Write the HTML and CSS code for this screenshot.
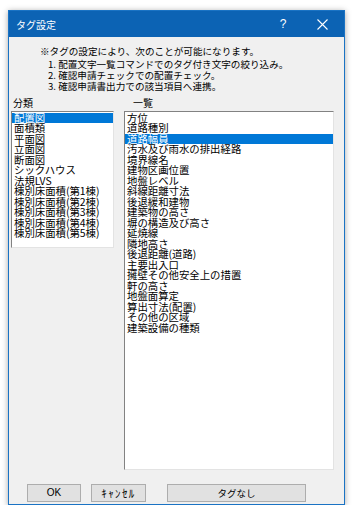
FILE: index.html
```html
<!DOCTYPE html>
<html lang="ja">
<head>
    <meta charset="UTF-8">
    <meta name="viewport" content="width=device-width, initial-scale=1.0">
    <title>タグ設定</title>
    <link rel="stylesheet" href="styles.css">
</head>
<body>
    <div class="window">
        <div class="titlebar">
            <span class="title">タグ設定</span>
            <span class="help">?</span>
            <span class="close">
                <svg width="11" height="11" viewBox="0 0 11 11">
                    <path d="M0.5 0.5 L10.5 10.5 M10.5 0.5 L0.5 10.5" stroke="#fff" stroke-width="1.1" fill="none"/>
                </svg>
            </span>
        </div>
        <div class="content">
            <div class="notes">
                <p class="note-head">※タグの設定により、次のことが可能になります。</p>
                <p class="note-item">1. 配置文字一覧コマンドでのタグ付き文字の絞り込み。</p>
                <p class="note-item">2. 確認申請チェックでの配置チェック。</p>
                <p class="note-item">3. 確認申請書出力での該当項目へ連携。</p>
            </div>
            <div class="panes">
                <div class="pane pane-left">
                    <div class="pane-label">分類</div>
                    <ul class="listbox list-left">
                        <li class="selected">配置図</li>
                        <li>面積類</li>
                        <li>平面図</li>
                        <li>立面図</li>
                        <li>断面図</li>
                        <li>シックハウス</li>
                        <li>法規LVS</li>
                        <li>棟別床面積(第1棟)</li>
                        <li>棟別床面積(第2棟)</li>
                        <li>棟別床面積(第3棟)</li>
                        <li>棟別床面積(第4棟)</li>
                        <li>棟別床面積(第5棟)</li>
                    </ul>
                </div>
                <div class="pane pane-right">
                    <div class="pane-label">一覧</div>
                    <ul class="listbox list-right">
                        <li>方位</li>
                        <li>道路種別</li>
                        <li class="selected">道路幅員</li>
                        <li>汚水及び雨水の排出経路</li>
                        <li>境界線名</li>
                        <li>建物区画位置</li>
                        <li>地盤レベル</li>
                        <li>斜線距離寸法</li>
                        <li>後退緩和建物</li>
                        <li>建築物の高さ</li>
                        <li>塀の構造及び高さ</li>
                        <li>延焼線</li>
                        <li>隣地高さ</li>
                        <li>後退距離(道路)</li>
                        <li>主要出入口</li>
                        <li>擁壁その他安全上の措置</li>
                        <li>軒の高さ</li>
                        <li>地盤面算定</li>
                        <li>算出寸法(配置)</li>
                        <li>その他の区域</li>
                        <li>建築設備の種類</li>
                    </ul>
                </div>
            </div>
            <div class="buttons">
                <button class="btn btn-ok">OK</button>
                <button class="btn btn-cancel">ｷｬﾝｾﾙ</button>
                <button class="btn btn-none">タグなし</button>
            </div>
        </div>
    </div>
</body>
</html>
```

FILE: styles.css
```css
body {
    margin: 0;
    padding: 0;
    background: #fff;
    font-family: "Noto Sans CJK JP", "Noto Sans", sans-serif;
    color: #000;
}
.window {
    margin: 10px 0 0 8px;
    width: 337px;
    height: 495px;
    box-sizing: border-box;
    border: 1px solid #1a73c4;
    background: #f0f0f0;
    display: flex;
    flex-direction: column;
    box-shadow: 0 1px 6px rgba(0, 0, 0, 0.35);
}
.titlebar {
    height: 26px;
    background: #0c63b4;
    color: #fff;
    display: flex;
    align-items: center;
    padding-left: 7px;
    font-size: 10px;
}
.title {
    flex: 1;
}
.help {
    width: 12px;
    text-align: center;
    font-family: "Liberation Sans", sans-serif;
    font-size: 12px;
    margin-right: 28px;
}
.close {
    display: flex;
    margin-right: 16px;
}
.content {
    flex: 1;
    display: flex;
    flex-direction: column;
}
.notes {
    padding: 9px 0 0 31px;
    font-size: 9.6px;
}
.notes p {
    margin: 0;
    line-height: 11px;
    height: 11px;
    white-space: nowrap;
}
.note-head {
    margin-bottom: 2px !important;
}
.note-item {
    padding-left: 8px;
}
.panes {
    display: flex;
    margin-top: 5px;
    padding-left: 2px;
    gap: 10px;
}
.pane-label {
    font-size: 10px;
    line-height: 11px;
    padding-left: 2px;
    margin-bottom: 2.5px;
}
.pane-right .pane-label {
    padding-left: 9px;
}
.listbox {
    list-style: none;
    margin: 0;
    padding: 1px 0 0 0;
    box-sizing: border-box;
    background: #fff;
    border-top: 1px solid #828282;
    border-left: 1px solid #828282;
    border-right: 1px solid #e3e3e3;
    border-bottom: 1px solid #e3e3e3;
    font-size: 10.4px;
}
.listbox li {
    height: 10.5px;
    line-height: 10.5px;
    padding-left: 2px;
    white-space: nowrap;
}
.listbox li.selected {
    background: #0078d7;
    color: #fff;
}
.list-left {
    width: 103px;
    height: 137px;
}
.list-right {
    width: 210px;
    height: 359px;
}
.buttons {
    display: flex;
    margin-top: 14px;
    padding-left: 18px;
}
.btn {
    height: 18px;
    box-sizing: border-box;
    border: 1px solid #adadad;
    background: #e1e1e1;
    font-family: "Noto Sans CJK JP", sans-serif;
    font-size: 9.5px;
    padding: 0;
    color: #000;
}
.btn-ok {
    width: 54px;
    font-family: "Liberation Sans", sans-serif;
    font-size: 10px;
}
.btn-cancel {
    width: 55px;
    margin-left: 10px;
    font-size: 11px;
    letter-spacing: 1.4px;
}
.btn-none {
    width: 139px;
    margin-left: 21px;
}
```
